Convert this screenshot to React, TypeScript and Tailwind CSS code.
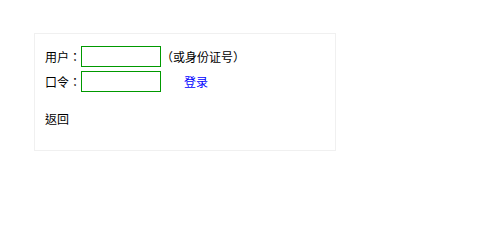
export default function App() {
  return (
    <div className="min-h-screen bg-white pt-[33px] pl-[34px] text-[12px] text-black [text-spacing-trim:space-all]" style={{ fontFamily: '"Noto Sans CJK TC", "Noto Sans CJK SC", sans-serif' }}>
      <div className="w-[302px] h-[118px] border border-[#f0f0f0] pl-[10px] pt-[12px]">
        <div className="flex items-center h-[21px]">
          <span className="w-[36px] leading-none">用户：</span>
          <input type="text" className="w-[80px] h-[21px] border border-[#009900] outline-none" />
          <span className="leading-none">（或身份证号）</span>
        </div>
        <div className="flex items-center h-[21px] mt-[4px]">
          <span className="w-[36px] leading-none">口令：</span>
          <input type="password" className="w-[80px] h-[21px] border border-[#009900] outline-none" />
          <a href="#" className="ml-[23px] leading-none text-[#0000ff]">登录</a>
        </div>
        <div className="mt-[21px] leading-none">返回</div>
      </div>
    </div>
  );
}
